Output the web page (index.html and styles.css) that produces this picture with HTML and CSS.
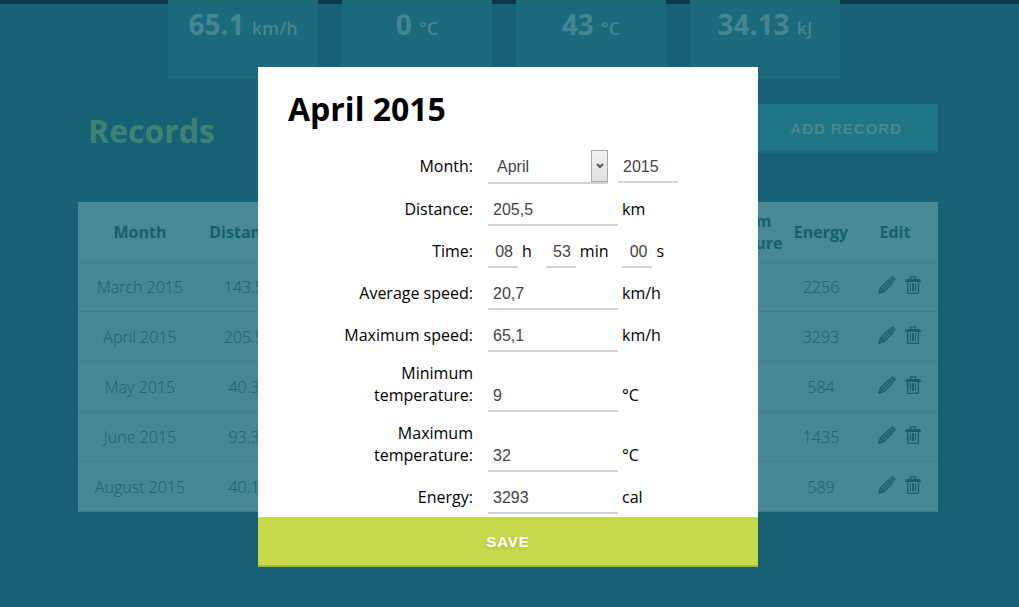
FILE: index.html
```html
<!DOCTYPE html>
<html lang="en">
<head>
<meta charset="utf-8">
<title>Records</title>
<link rel="stylesheet" href="styles.css">
</head>
<body>
<svg class="sprite" aria-hidden="true">
  <symbol id="pencil" viewBox="0 0 18 18">
    <path fill="none" stroke="currentColor" stroke-width="1.5" d="M1.200 16.800l1.300-4.600L11 3.700l3.300 3.300-8.500 8.500zM2.500 12.200l3.300 3.300M4.300 13.700L12.600 5.400"/>
    <path fill="currentColor" d="M.2 17.800l1-3.600 2.600 2.600zM11.800 2.300l1-1 3.900 3.900-1 1zM13.500.7q.9-.9 1.800 0l2 2q.9.9 0 1.800l-.2.200L13.300.9z"/>
  </symbol>
  <symbol id="trash" viewBox="0 0 16 18">
    <path fill="none" stroke="currentColor" stroke-width="1.300" d="M5.500 3V.8h5V3M2.600 5.500v11.200q0 .7.700.7h9.400q.7 0 .7-.7V5.500"/>
    <path fill="currentColor" d="M1 3h14l1 3H0zM5 7h1v8H5zM7 7h2v8H7zM10 7h1v8h-1z"/>
  </symbol>
</svg>

<main class="page">
  <section class="stats">
    <div class="stat">65.1 <span class="stat-unit">km/h</span></div>
    <div class="stat">0 <span class="stat-unit">°C</span></div>
    <div class="stat">43 <span class="stat-unit">°C</span></div>
    <div class="stat">34.13 <span class="stat-unit">kJ</span></div>
  </section>
  <section class="records">
    <header class="records-head">
      <h2 class="records-title">Records</h2>
      <button class="button add-button" type="button">ADD RECORD</button>
    </header>
    <table class="table">
      <colgroup>
        <col class="col-month"><col class="col-distance"><col>
        <col class="col-temp"><col class="col-energy"><col class="col-edit">
      </colgroup>
      <thead>
        <tr><th>Month</th><th>Distance</th><th></th><th>Maximum temperature</th><th>Energy</th><th>Edit</th></tr>
      </thead>
      <tbody>
        <tr><td>March 2015</td><td>143.5</td><td></td><td></td><td>2256</td>
          <td><div class="actions"><button class="icon-button" type="button" aria-label="Edit"><svg class="icon"><use href="#pencil"/></svg></button><button class="icon-button" type="button" aria-label="Delete"><svg class="icon icon-trash"><use href="#trash"/></svg></button></div></td></tr>
        <tr><td>April 2015</td><td>205.5</td><td></td><td></td><td>3293</td>
          <td><div class="actions"><button class="icon-button" type="button" aria-label="Edit"><svg class="icon"><use href="#pencil"/></svg></button><button class="icon-button" type="button" aria-label="Delete"><svg class="icon icon-trash"><use href="#trash"/></svg></button></div></td></tr>
        <tr><td>May 2015</td><td>40.3</td><td></td><td></td><td>584</td>
          <td><div class="actions"><button class="icon-button" type="button" aria-label="Edit"><svg class="icon"><use href="#pencil"/></svg></button><button class="icon-button" type="button" aria-label="Delete"><svg class="icon icon-trash"><use href="#trash"/></svg></button></div></td></tr>
        <tr><td>June 2015</td><td>93.3</td><td></td><td></td><td>1435</td>
          <td><div class="actions"><button class="icon-button" type="button" aria-label="Edit"><svg class="icon"><use href="#pencil"/></svg></button><button class="icon-button" type="button" aria-label="Delete"><svg class="icon icon-trash"><use href="#trash"/></svg></button></div></td></tr>
        <tr><td>August 2015</td><td>40.1</td><td></td><td></td><td>589</td>
          <td><div class="actions"><button class="icon-button" type="button" aria-label="Edit"><svg class="icon"><use href="#pencil"/></svg></button><button class="icon-button" type="button" aria-label="Delete"><svg class="icon icon-trash"><use href="#trash"/></svg></button></div></td></tr>
      </tbody>
    </table>
  </section>
</main>

<div class="overlay">
  <form class="modal" role="dialog" aria-labelledby="modal-title">
    <div class="modal-body">
      <h1 class="modal-title" id="modal-title">April 2015</h1>
      <div class="fields">
        <div class="row">
          <label class="label" for="month">Month:</label>
          <div class="controls">
            <span class="select-wrap">
              <select class="input select" id="month"><option>March</option><option selected>April</option><option>May</option><option>June</option><option>August</option></select>
              <span class="select-button"><svg class="chevron" viewBox="0 0 8 6"><path d="M1 1l3 3 3-3" fill="none" stroke="currentColor" stroke-width="2"/></svg></span>
            </span>
            <input class="input input-year" type="text" value="2015" aria-label="Year">
          </div>
        </div>
        <div class="row">
          <label class="label" for="distance">Distance:</label>
          <div class="controls"><input class="input" id="distance" type="text" value="205,5"><span class="unit">km</span></div>
        </div>
        <div class="row">
          <label class="label" for="hours">Time:</label>
          <div class="controls">
            <input class="input input-time" id="hours" type="text" value="08"><span class="unit unit-time">h</span>
            <input class="input input-time" type="text" value="53" aria-label="Minutes"><span class="unit unit-time">min</span>
            <input class="input input-time" type="text" value="00" aria-label="Seconds"><span class="unit">s</span>
          </div>
        </div>
        <div class="row">
          <label class="label" for="avg">Average speed:</label>
          <div class="controls"><input class="input" id="avg" type="text" value="20,7"><span class="unit">km/h</span></div>
        </div>
        <div class="row">
          <label class="label" for="max">Maximum speed:</label>
          <div class="controls"><input class="input" id="max" type="text" value="65,1"><span class="unit">km/h</span></div>
        </div>
        <div class="row">
          <label class="label" for="tmin">Minimum temperature:</label>
          <div class="controls"><input class="input" id="tmin" type="text" value="9"><span class="unit">°C</span></div>
        </div>
        <div class="row">
          <label class="label" for="tmax">Maximum temperature:</label>
          <div class="controls"><input class="input" id="tmax" type="text" value="32"><span class="unit">°C</span></div>
        </div>
        <div class="row">
          <label class="label" for="energy">Energy:</label>
          <div class="controls"><input class="input" id="energy" type="text" value="3293"><span class="unit">cal</span></div>
        </div>
      </div>
    </div>
    <button class="button save-button" type="button">SAVE</button>
  </form>
</div>
</body>
</html>
```

FILE: styles.css
```css
* { box-sizing: border-box; }

body {
  margin: 0;
  min-height: 100vh;
  background: #176175;
  color: #000;
  font: 16px/22px "Open Sans", sans-serif;
}

.sprite { position: absolute; width: 0; height: 0; }

.page {
  padding-right: 3px;
  border-top: 4px solid #0b3a4b;
}

.stats {
  display: flex;
  justify-content: center;
  gap: 24px;
  margin-top: -4px;
  padding-right: 8px;
}

.stat {
  width: 150px;
  height: 79px;
  padding-top: 4px;
  border-top: 4px solid #1b6b70;
  background: #1a6a7b;
  color: #468593;
  font-size: 28px;
  font-weight: 700;
  line-height: 32px;
  text-align: center;
}

.stat-unit {
  font-size: 18px;
  font-weight: 600;
}

.records {
  max-width: 860px;
  margin: 25px auto 0;
}

.records-head {
  display: flex;
  justify-content: space-between;
  margin-bottom: 44px;
  padding-left: 10px;
}

.records-title {
  margin: 0;
  color: #3e8273;
  font-size: 32px;
  font-weight: 700;
  line-height: 54px;
}

.button {
  height: 50px;
  padding: 2px 36px 0;
  border: 0;
  border-bottom: 2px solid;
  font: bold 15px/20px "Liberation Sans", Arial, sans-serif;
  letter-spacing: 1px;
  cursor: pointer;
}

.add-button {
  height: 49px;
  border-color: #1b6b7b;
  background: #1f7583;
  color: #468a96;
}

.table {
  width: 100%;
  table-layout: fixed;
  border-collapse: collapse;
  background: #468793;
  color: #195e6e;
  text-align: center;
}

.col-month { width: 124px; }
.col-distance { width: 84px; }
.col-temp { width: 118px; }
.col-energy { width: 62px; }
.col-edit { width: 86px; }

.table th {
  height: 59px;
  padding: 0;
  background: #478995;
  font-weight: 700;
}

.table td {
  height: 50px;
  padding: 2px 0 0;
  border-bottom: 1px solid #3f7f8c;
  font-weight: 300;
}

.actions {
  display: flex;
  justify-content: center;
  gap: 9px;
  padding: 0 0 4px 8px;
}

.icon-button {
  display: flex;
  padding: 0;
  border: 0;
  background: none;
  color: #195e6e;
  cursor: pointer;
}

.icon { width: 18px; height: 18px; }
.icon-trash { width: 16px; }

.overlay {
  position: fixed;
  inset: 0;
  display: flex;
  justify-content: center;
  align-items: flex-start;
  padding: 67px 3px 0 0;
}

.modal {
  width: 500px;
  max-width: 100%;
  background: #fff;
}

.modal-body { padding: 20px 30px 3px; }

.modal-title {
  margin: 0 0 19px;
  font-size: 32px;
  font-weight: 700;
  line-height: 44px;
}

.fields {
  display: flex;
  flex-direction: column;
  gap: 10px;
}

.row {
  display: grid;
  grid-template-columns: 185px 1fr;
  column-gap: 15px;
  align-items: last baseline;
}

.label {
  padding-left: 53px;
  text-align: right;
}

.controls {
  display: flex;
  align-items: baseline;
}

.input {
  width: 130px;
  height: 32px;
  padding: 2px 5px 0;
  border: 0;
  border-bottom: 2px solid #d3d3d3;
  border-radius: 0;
  background: none;
  color: #444;
  font: 16px/22px "Liberation Sans", Arial, sans-serif;
}

.select-wrap {
  position: relative;
  margin-right: 10px;
}

.select {
  width: 120px;
  height: 34px;
  padding-left: 9px;
  appearance: none;
}

.select-button {
  position: absolute;
  top: 0;
  right: 0;
  display: flex;
  align-items: center;
  justify-content: center;
  width: 17px;
  height: 32px;
  border: 1px solid #a9a9a9;
  background: linear-gradient(#f0f0f0, #e2e2e2);
  color: #555;
  pointer-events: none;
}

.chevron { width: 8px; height: 6px; }

.input-year { width: 60px; }

.input-time {
  width: 30px;
  text-align: right;
}

.unit { margin-left: 4px; }
.unit-time { margin-right: 14px; }

.save-button {
  display: block;
  width: 100%;
  border-color: #a4bc39;
  background: #c8da4b;
  color: #fff;
  text-shadow: 0 2px 4px rgba(0, 0, 0, 0.15);
}
```
